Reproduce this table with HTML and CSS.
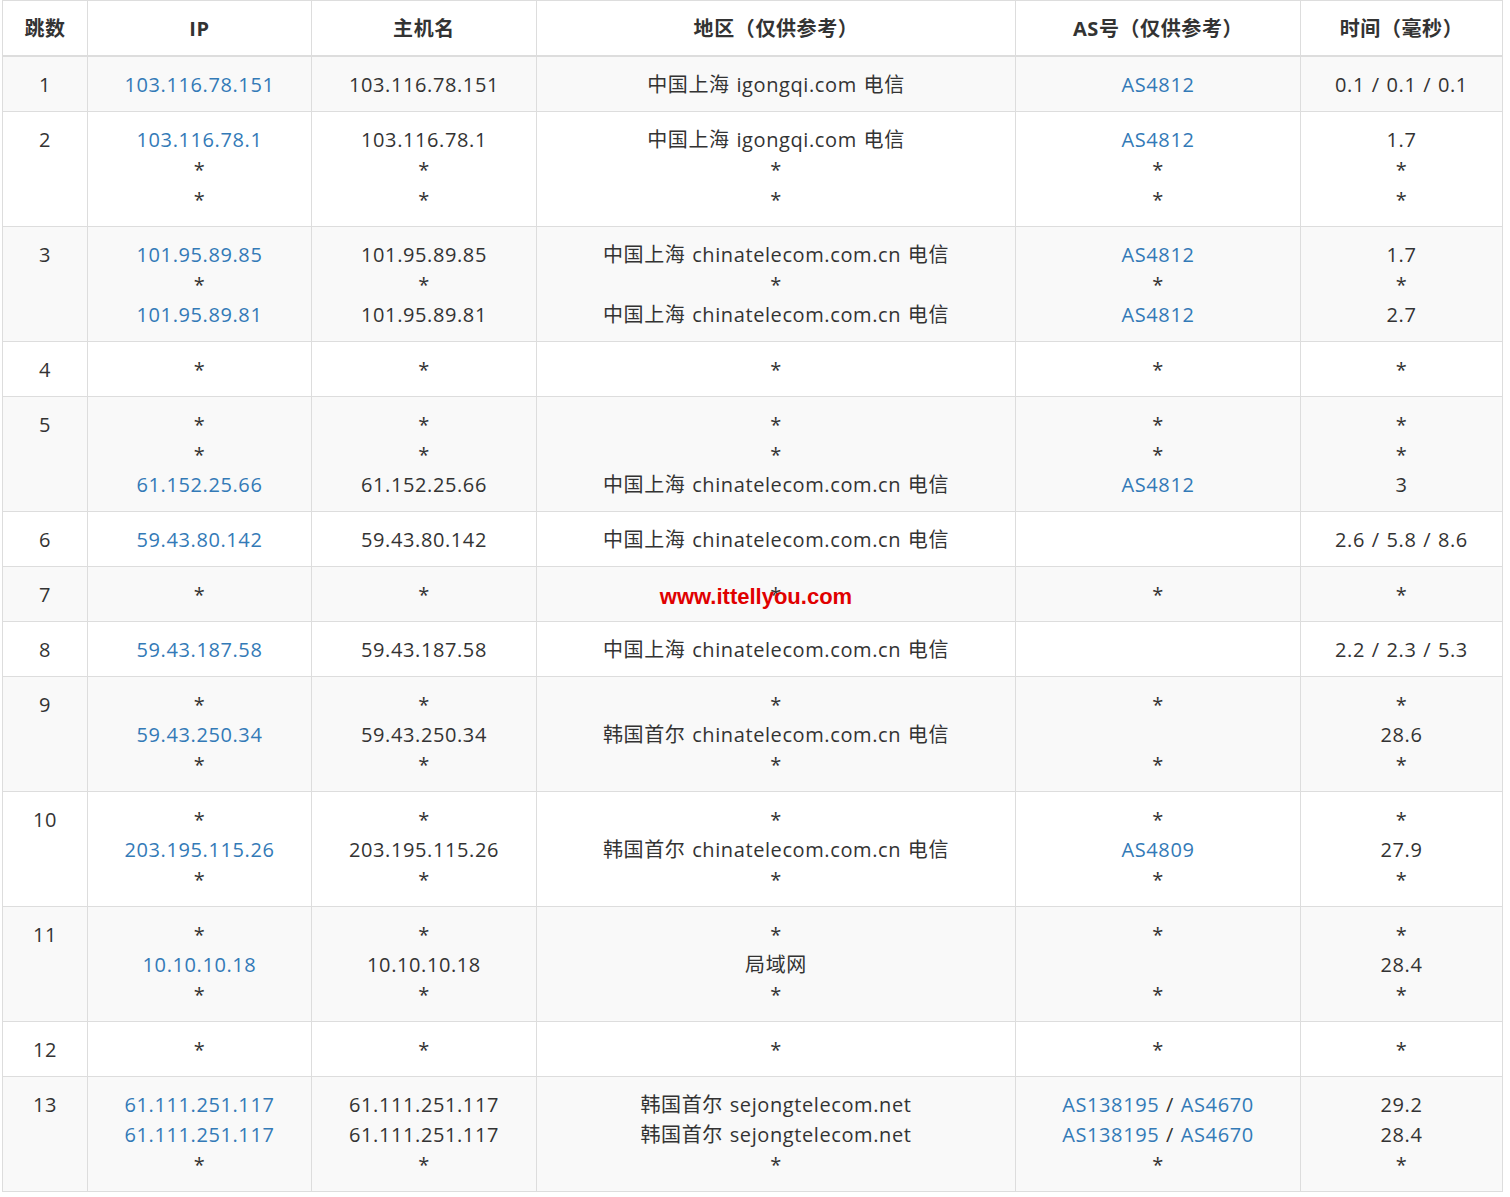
FILE: index.html
```html
<!DOCTYPE html>
<html lang="zh-CN">
<head>
<meta charset="utf-8">
<title>Traceroute</title>
<link rel="stylesheet" href="styles.css">
</head>
<body>
<div class="wrap">
<table class="trace">
<colgroup>
<col class="c-hop"><col class="c-ip"><col class="c-host"><col class="c-geo"><col class="c-as"><col class="c-time">
</colgroup>
<thead>
<tr><th>跳数</th><th>IP</th><th>主机名</th><th>地区（仅供参考）</th><th>AS号（仅供参考）</th><th>时间（毫秒）</th></tr>
</thead>
<tbody>
<tr><td>1</td><td><a>103.116.78.151</a></td><td>103.116.78.151</td><td>中国上海 igongqi.com 电信</td><td><a>AS4812</a></td><td>0.1 / 0.1 / 0.1</td></tr>
<tr><td>2</td><td><a>103.116.78.1</a><br>*<br>*</td><td>103.116.78.1<br>*<br>*</td><td>中国上海 igongqi.com 电信<br>*<br>*</td><td><a>AS4812</a><br>*<br>*</td><td>1.7<br>*<br>*</td></tr>
<tr><td>3</td><td><a>101.95.89.85</a><br>*<br><a>101.95.89.81</a></td><td>101.95.89.85<br>*<br>101.95.89.81</td><td>中国上海 chinatelecom.com.cn 电信<br>*<br>中国上海 chinatelecom.com.cn 电信</td><td><a>AS4812</a><br>*<br><a>AS4812</a></td><td>1.7<br>*<br>2.7</td></tr>
<tr><td>4</td><td>*</td><td>*</td><td>*</td><td>*</td><td>*</td></tr>
<tr><td>5</td><td>*<br>*<br><a>61.152.25.66</a></td><td>*<br>*<br>61.152.25.66</td><td>*<br>*<br>中国上海 chinatelecom.com.cn 电信</td><td>*<br>*<br><a>AS4812</a></td><td>*<br>*<br>3</td></tr>
<tr><td>6</td><td><a>59.43.80.142</a></td><td>59.43.80.142</td><td>中国上海 chinatelecom.com.cn 电信</td><td></td><td>2.6 / 5.8 / 8.6</td></tr>
<tr><td>7</td><td>*</td><td>*</td><td class="wm-cell">*<span class="watermark">www.ittellyou.com</span></td><td>*</td><td>*</td></tr>
<tr><td>8</td><td><a>59.43.187.58</a></td><td>59.43.187.58</td><td>中国上海 chinatelecom.com.cn 电信</td><td></td><td>2.2 / 2.3 / 5.3</td></tr>
<tr><td>9</td><td>*<br><a>59.43.250.34</a><br>*</td><td>*<br>59.43.250.34<br>*</td><td>*<br>韩国首尔 chinatelecom.com.cn 电信<br>*</td><td>*<br>&nbsp;<br>*</td><td>*<br>28.6<br>*</td></tr>
<tr><td>10</td><td>*<br><a>203.195.115.26</a><br>*</td><td>*<br>203.195.115.26<br>*</td><td>*<br>韩国首尔 chinatelecom.com.cn 电信<br>*</td><td>*<br><a>AS4809</a><br>*</td><td>*<br>27.9<br>*</td></tr>
<tr><td>11</td><td>*<br><a>10.10.10.18</a><br>*</td><td>*<br>10.10.10.18<br>*</td><td>*<br>局域网<br>*</td><td>*<br>&nbsp;<br>*</td><td>*<br>28.4<br>*</td></tr>
<tr><td>12</td><td>*</td><td>*</td><td>*</td><td>*</td><td>*</td></tr>
<tr><td>13</td><td><a>61.111.251.117</a><br><a>61.111.251.117</a><br>*</td><td>61.111.251.117<br>61.111.251.117<br>*</td><td>韩国首尔 sejongtelecom.net<br>韩国首尔 sejongtelecom.net<br>*</td><td><a>AS138195</a> / <a>AS4670</a><br><a>AS138195</a> / <a>AS4670</a><br>*</td><td>29.2<br>28.4<br>*</td></tr>
</tbody>
</table>
</div>
</body>
</html>
```

FILE: styles.css
```css
html, body {
  margin: 0;
  padding: 0;
  background: #fff;
}
.wrap {
  padding: 0 0 0 2px;
}
.trace {
  border-collapse: collapse;
  table-layout: fixed;
  width: 1500px;
  font-family: "Open Sans", "Noto Sans CJK SC", sans-serif;
  font-size: 20px;
  line-height: 30px;
  color: #333;
  border: 1px solid #ddd;
}
.c-hop { width: 85px; }
.c-ip { width: 224px; }
.c-host { width: 225px; }
.c-geo { width: 479px; }
.c-as { width: 285px; }
.c-time { width: 202px; }
.trace th,
.trace td {
  border: 1px solid #ddd;
  padding: 13px 0 11px;
  text-align: center;
  vertical-align: top;
  white-space: nowrap;
  letter-spacing: 0.6px;
  word-spacing: 1px;
}
.trace th {
  font-weight: bold;
  border-bottom: 2px solid #ddd;
  vertical-align: bottom;
}
.trace tbody tr:nth-child(odd) {
  background: #f9f9f9;
}
.trace a {
  color: #337ab7;
  text-decoration: none;
}
.wm-cell {
  position: relative;
}
.watermark {
  position: absolute;
  left: 0;
  right: 0;
  top: 15px;
  text-align: center;
  padding-right: 40px;
  font-family: "Liberation Sans", Arial, sans-serif;
  font-weight: bold;
  font-size: 22px;
  line-height: 30px;
  letter-spacing: 0;
  word-spacing: 0;
  color: #e00000;
}
```
